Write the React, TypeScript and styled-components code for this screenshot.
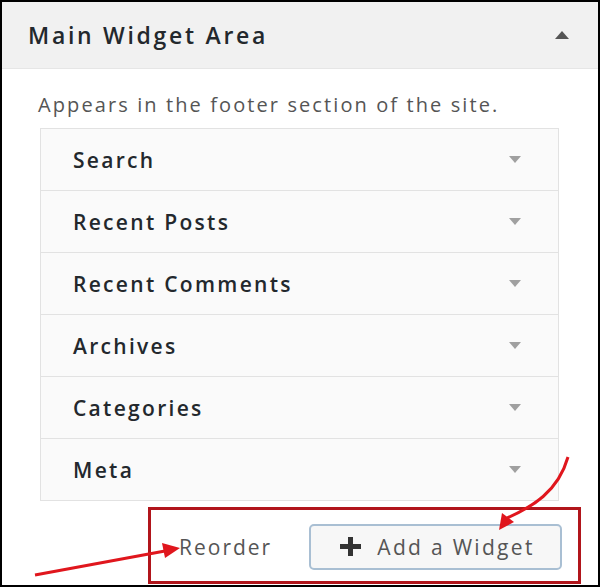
import React from 'react';
import styled, { createGlobalStyle } from 'styled-components';

const GlobalStyle = createGlobalStyle`
  html, body {
    margin: 0;
    padding: 0;
    background: #fff;
  }
  body {
    font-family: "Open Sans", "Liberation Sans", sans-serif;
  }
`;

const Frame = styled.div`
  position: relative;
  width: 600px;
  height: 587px;
  box-sizing: border-box;
  border: 2px solid #000;
  background: #fff;
  overflow: hidden;
`;

const Header = styled.div`
  display: flex;
  align-items: center;
  justify-content: space-between;
  height: 67px;
  box-sizing: border-box;
  padding: 0 29px 0 26px;
  background: #f1f1f1;
  border-bottom: 1px solid #e6e6e6;
  color: #23282d;
  font-size: 23px;
  font-weight: 600;
  letter-spacing: 2.7px;
`;

const Caret = styled.span<{ up?: boolean; shade: string; size: number }>`
  width: 0;
  height: 0;
  border-left: ${(p) => p.size}px solid transparent;
  border-right: ${(p) => p.size}px solid transparent;
  ${(p) =>
    p.up
      ? `border-bottom: ${p.size + 1}px solid ${p.shade};`
      : `border-top: ${p.size + 1}px solid ${p.shade};`}
`;

const Body = styled.div`
  padding: 22px 39px 0 38px;
`;

const Description = styled.p`
  margin: 0 0 10px -2px;
  font-size: 20px;
  color: #555;
  letter-spacing: 2.1px;
`;

const List = styled.div`
  border: 1px solid #e2e2e2;
  border-top: none;
`;

const Row = styled.div`
  display: flex;
  align-items: center;
  justify-content: space-between;
  height: 62px;
  box-sizing: border-box;
  padding: 0 37px 0 32px;
  border-top: 1px solid #e2e2e2;
  background: #fafafa;
  color: #23282d;
  font-size: 21px;
  font-weight: 600;
  letter-spacing: 2.3px;
`;

const Footer = styled.div`
  display: flex;
  justify-content: flex-end;
  padding: 6px 17px 0 0;
`;

const Highlight = styled.div`
  display: flex;
  align-items: center;
  width: 433px;
  height: 77px;
  box-sizing: border-box;
  padding: 2px 16px 0 28px;
  border: 3px solid #b1151b;
`;

const TextLink = styled.span`
  font-size: 21px;
  color: #555;
  letter-spacing: 2px;
`;

const AddButton = styled.button`
  display: flex;
  align-items: center;
  justify-content: center;
  gap: 16px;
  width: 253px;
  height: 46px;
  margin-left: auto;
  padding: 0 0 0 4px;
  border: 2px solid #a9bfd3;
  border-radius: 5px;
  background: #f7f7f7;
  color: #555;
  font-family: "Open Sans", "Liberation Sans", sans-serif;
  font-size: 21px;
  letter-spacing: 2.3px;
  cursor: pointer;
`;

const Overlay = styled.svg`
  position: absolute;
  left: 0;
  top: 0;
  pointer-events: none;
`;

const widgets = ['Search', 'Recent Posts', 'Recent Comments', 'Archives', 'Categories', 'Meta'];

function PlusIcon() {
  return (
    <svg width="21" height="19" viewBox="0 0 21 19">
      <rect x="8" y="0" width="5" height="19" fill="#333" />
      <rect x="0" y="7" width="21" height="5" fill="#333" />
    </svg>
  );
}

export default function App() {
  return (
    <>
      <GlobalStyle />
      <Frame>
        <Header>
          <span>Main Widget Area</span>
          <Caret up shade="#555" size={7} />
        </Header>
        <Body>
          <Description>Appears in the footer section of the site.</Description>
          <List>
            {widgets.map((w) => (
              <Row key={w}>
                <span>{w}</span>
                <Caret shade="#a0a0a0" size={6} />
              </Row>
            ))}
          </List>
        </Body>
        <Footer>
          <Highlight>
            <TextLink>Reorder</TextLink>
            <AddButton>
              <PlusIcon />
              Add a Widget
            </AddButton>
          </Highlight>
        </Footer>
        <Overlay width="600" height="587" viewBox="0 0 600 587">
          <line x1="33" y1="573" x2="163" y2="549" stroke="#e0161d" strokeWidth="3" />
          <polygon points="178,546 160,541 163,556" fill="#e0161d" />
          <path d="M566 455 C 556 490, 530 505, 505 516" fill="none" stroke="#e0161d" strokeWidth="3" />
          <polygon points="497,528 500,511 512,520" fill="#e0161d" />
        </Overlay>
      </Frame>
    </>
  );
}
